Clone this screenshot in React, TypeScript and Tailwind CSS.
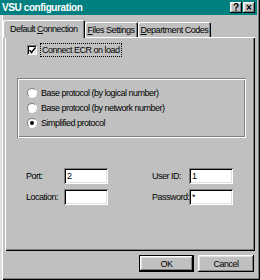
import React from 'react';

const raised =
  'shadow-[inset_-1px_-1px_#000,inset_1px_1px_#fff,inset_-2px_-2px_#808080,inset_2px_2px_#dfdfdf]';
const sunken =
  'shadow-[inset_1px_1px_#808080,inset_-1px_-1px_#fff,inset_2px_2px_#000,inset_-2px_-2px_#dfdfdf]';

function CaptionButton({ children }: { children: React.ReactNode }) {
  return (
    <div
      className={`w-[12px] h-[11px] bg-[#c0c0c0] ${raised} flex items-center justify-center text-[10px] font-bold leading-none text-black tracking-normal`}
    >
      {children}
    </div>
  );
}

function Tab({ label, hot, active }: { label: string; hot: number; active?: boolean }) {
  const text = (
    <span>
      {label.slice(0, hot)}
      <span className="underline">{label[hot]}</span>
      {label.slice(hot + 1)}
    </span>
  );
  if (active) {
    return (
      <div className="relative z-10 -mb-px h-[18px] px-[7px] pt-[3px] bg-[#c0c0c0] shadow-[inset_1px_1px_#fff,inset_-1px_0_#000,inset_-2px_0_#808080] rounded-t-[2px]">
        {text}
      </div>
    );
  }
  return (
    <div className="h-[15px] px-[3px] pt-[2px] bg-[#c0c0c0] shadow-[inset_1px_1px_#fff,inset_-1px_0_#000,inset_-2px_0_#808080] rounded-t-[2px]">
      {text}
    </div>
  );
}

function Radio({ label, checked }: { label: string; checked?: boolean }) {
  return (
    <div className="h-[15px] flex items-center gap-[4px]">
      <div className="relative w-[10px] h-[10px] rounded-full bg-white border border-[#808080] border-r-white border-b-white">
        {checked && <div className="absolute left-[2px] top-[2px] w-[4px] h-[4px] rounded-full bg-black" />}
      </div>
      <span>{label}</span>
    </div>
  );
}

function Field({ value }: { value: string }) {
  return (
    <div className={`w-[44px] h-[16px] bg-white ${sunken} pl-[3px] pt-[2px] leading-[12px]`}>{value}</div>
  );
}

export default function App() {
  return (
    <div className="w-[260px] h-[280px] bg-[#c0c0c0] font-['Liberation_Sans',Arial,sans-serif] text-[9px] tracking-[-0.5px] leading-[12px] text-black shadow-[inset_2px_0_#dfdfdf,inset_3px_0_#fff,inset_-1px_-1px_#000,inset_-2px_-2px_#808080] overflow-hidden">
      {/* title bar */}
      <div className="mr-[3px] h-[15px] bg-[#008080] flex items-center justify-between pl-[2px] pr-[2px]">
        <span className="text-white font-bold text-[10px] tracking-[-0.4px]">VSU configuration</span>
        <div className="flex gap-[1px]">
          <CaptionButton>?</CaptionButton>
          <CaptionButton>×</CaptionButton>
        </div>
      </div>

      {/* tabs */}
      <div className="mt-[5px] ml-[3px] h-[17px] flex items-end">
        <Tab label="Default Connection" hot={8} active />
        <Tab label="Files Settings" hot={0} />
        <Tab label="Department Codes" hot={0} />
      </div>

      {/* panel */}
      <div className="ml-[5px] w-[250px] h-[214px] shadow-[inset_1px_1px_#fff,inset_-1px_-1px_#000,inset_-2px_-2px_#808080] pt-[6px]">
        <div className="ml-[22px] flex items-center gap-[3px]">
          <div className={`w-[10px] h-[10px] bg-white ${sunken} flex items-center justify-center`}>
            <svg width="7" height="7" viewBox="0 0 7 7">
              <path d="M0.5 3 L2.5 5.5 L6.5 0.5" stroke="#000" strokeWidth="1.5" fill="none" />
            </svg>
          </div>
          <span className="border border-dotted border-black px-[1px]">Connect ECR on load</span>
        </div>

        <div className="ml-[12px] mt-[21px] w-[229px] h-[60px] shadow-[inset_1px_1px_#808080,inset_2px_2px_#fff,inset_-1px_-1px_#fff,inset_-2px_-2px_#808080] pl-[10px] pt-[7px]">
          <Radio label="Base protocol (by logical number)" />
          <Radio label="Base protocol (by network number)" />
          <Radio label="Simplified protocol" checked />
        </div>

        <div className="mt-[30px] ml-[21px] grid grid-cols-[38px_44px_44px_37px_44px] gap-y-[5px] items-center">
          <span>Port:</span>
          <Field value="2" />
          <span />
          <span>User ID:</span>
          <Field value="1" />
          <span>Location:</span>
          <Field value="" />
          <span />
          <span>Password:</span>
          <Field value="*" />
        </div>
      </div>

      {/* buttons */}
      <div className="mt-[4px] flex justify-end gap-[4px] pr-[6px]">
        <div className="w-[55px] h-[17px] bg-[#c0c0c0] border border-black">
          <div className={`w-full h-full ${raised} flex items-center justify-center`}>OK</div>
        </div>
        <div className={`w-[56px] h-[17px] bg-[#c0c0c0] ${raised} flex items-center justify-center`}>Cancel</div>
      </div>
    </div>
  );
}
